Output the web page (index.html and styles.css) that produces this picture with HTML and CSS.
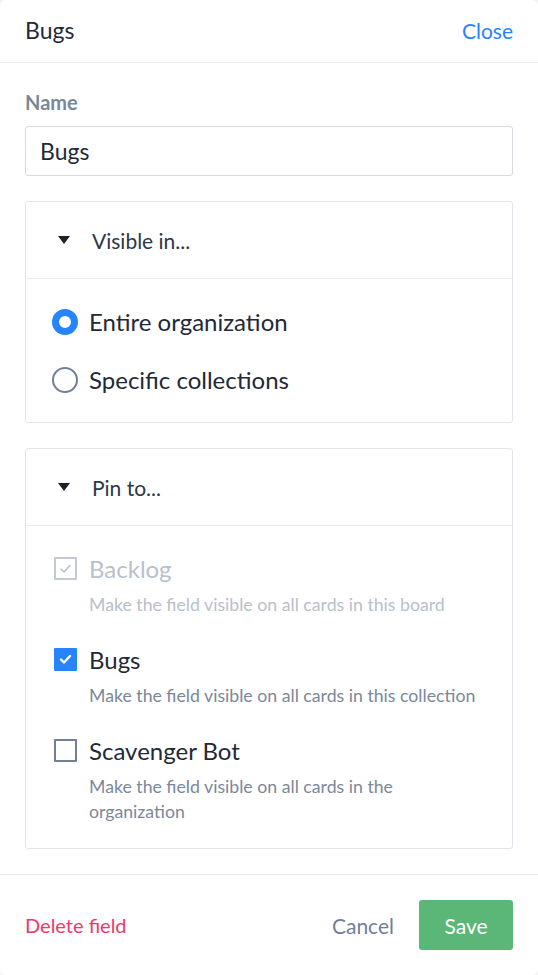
FILE: index.html
```html
<!DOCTYPE html>
<html>
<head>
<meta charset="utf-8">
<link rel="stylesheet" href="styles.css">
</head>
<body>
<div class="panel">
  <div class="header">
    <div class="title">Bugs</div>
    <div class="close">Close</div>
  </div>
  <div class="body">
    <div class="label">Name</div>
    <div class="input">Bugs</div>

    <div class="section">
      <div class="section-head">
        <span class="caret"></span>
        <span class="section-title">Visible in...</span>
      </div>
      <div class="radios">
        <div class="radio-row">
          <span class="radio checked"></span>
          <span class="opt">Entire organization</span>
        </div>
        <div class="radio-row">
          <span class="radio"></span>
          <span class="opt">Specific collections</span>
        </div>
      </div>
    </div>

    <div class="section">
      <div class="section-head">
        <span class="caret"></span>
        <span class="section-title">Pin to...</span>
      </div>
      <div class="checks">
        <div class="check-item disabled">
          <span class="box">
            <svg viewBox="0 0 23 23" width="23" height="23"><path d="M7 12 L10 15 L16 8.5" fill="none" stroke="#b8c0cc" stroke-width="1.6" stroke-linecap="round" stroke-linejoin="round"/></svg>
          </span>
          <div class="check-text">
            <div class="opt">Backlog</div>
            <div class="desc">Make the field visible on all cards in this board</div>
          </div>
        </div>
        <div class="check-item">
          <span class="box on">
            <svg viewBox="0 0 23 23" width="23" height="23"><path d="M7 11.5 L10 14.5 L16 8" fill="none" stroke="#ffffff" stroke-width="2.4" stroke-linecap="round" stroke-linejoin="round"/></svg>
          </span>
          <div class="check-text">
            <div class="opt">Bugs</div>
            <div class="desc">Make the field visible on all cards in this collection</div>
          </div>
        </div>
        <div class="check-item">
          <span class="box off"></span>
          <div class="check-text">
            <div class="opt">Scavenger Bot</div>
            <div class="desc">Make the field visible on all cards in the<br>organization</div>
          </div>
        </div>
      </div>
    </div>
  </div>
  <div class="footer">
    <div class="delete">Delete field</div>
    <div class="actions">
      <div class="cancel">Cancel</div>
      <div class="save">Save</div>
    </div>
  </div>
</div>
</body>
</html>
```
FILE: styles.css
```css
* { box-sizing: border-box; }
html, body { margin: 0; padding: 0; background: #f3f4f6; }
body { font-family: Lato, "Liberation Sans", sans-serif; color: #1e293b; }

.panel {
  width: 538px;
  height: 975px;
  background: #ffffff;
  border-radius: 6px;
  display: flex;
  flex-direction: column;
}

.header {
  height: 63px;
  border-bottom: 1px solid #e9ecef;
  display: flex;
  align-items: center;
  justify-content: space-between;
  padding: 0 25px 2px 25px;
}
.title { font-size: 23px; color: #1f2937; }
.close { font-size: 21px; color: #2684ff; }

.body { padding: 27px 25px 0 25px; }
.label { font-size: 20px; font-weight: 700; color: #7a8799; line-height: 24px; }
.input {
  margin-top: 12px;
  height: 50px;
  border: 1px solid #d5dade;
  border-radius: 3px;
  padding: 0 14px;
  display: flex;
  align-items: center;
  font-size: 23px;
  color: #1f2937;
}

.section {
  margin-top: 25px;
  border: 1px solid #e2e6ea;
  border-radius: 3px;
}
.section + .section { margin-top: 25px; }
.section-head {
  height: 77px;
  border-bottom: 1px solid #e9ecef;
  display: flex;
  align-items: center;
  padding-left: 32px;
}
.caret {
  width: 0; height: 0;
  border-left: 6px solid transparent;
  border-right: 6px solid transparent;
  border-top: 8px solid #1a202c;
  margin-right: 22px;
}
.section-title { font-size: 21px; color: #2d3748; }

.radios { padding: 14px 0 13px 26px; }
.radio-row { height: 58px; display: flex; align-items: center; }
.radio {
  width: 26px; height: 26px;
  border-radius: 50%;
  border: 2px solid #718096;
  margin-right: 11px;
  flex: none;
}
.radio.checked { border: 7px solid #2684ff; }
.opt { font-size: 24px; color: #1f2937; line-height: 30px; }

.checks { padding: 28px 0 24px 28px; display: flex; flex-direction: column; gap: 28px; }
.check-item { display: flex; align-items: flex-start; }
.box {
  width: 23px; height: 23px;
  flex: none;
  margin-top: 3px;
  margin-right: 12px;
  border-radius: 1px;
  display: block;
}
.box svg { display: block; }
.box.on { background: #2684ff; }
.box.off { border: 2px solid #718096; }
.disabled .box { border: 2px solid #c3c9d2; }
.disabled .box svg { margin: -2px; }
.disabled .opt { color: #b8c0cc; }
.disabled .desc { color: #b8c0cc; }
.desc { margin-top: 8px; font-size: 17.7px; line-height: 25px; color: #7b8899; }

.footer {
  margin-top: 25px;
  border-top: 1px solid #e9ecef;
  flex: 1;
  display: flex;
  align-items: center;
  justify-content: space-between;
  padding: 0 25px 0 25px;
}
.delete { font-size: 20px; color: #f0386b; }
.actions { display: flex; align-items: center; gap: 25px; }
.cancel { font-size: 21px; color: #718096; }
.save {
  width: 94px; height: 50px;
  background: #5bb777;
  color: #ffffff;
  border-radius: 3px;
  font-size: 21px;
  display: flex; align-items: center; justify-content: center;
}
```
